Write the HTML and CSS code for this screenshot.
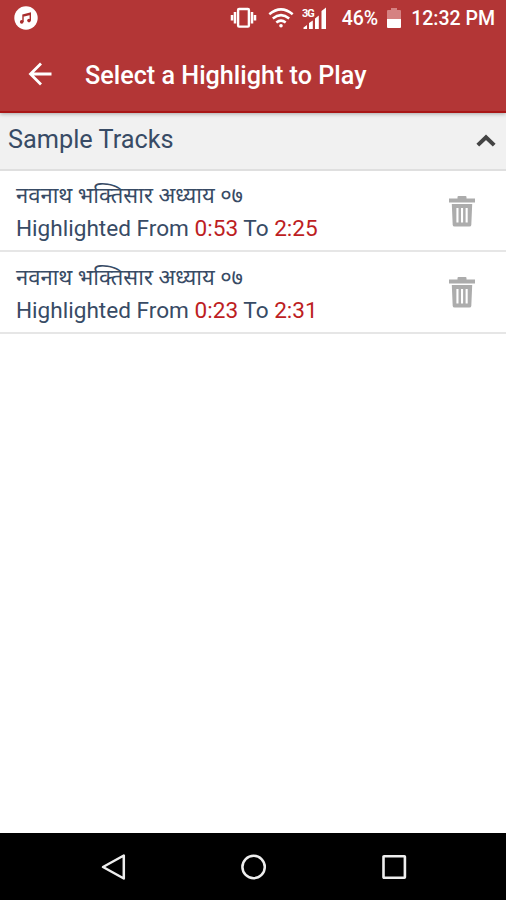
FILE: index.html
```html
<!DOCTYPE html>
<html lang="en">
<head>
    <meta charset="UTF-8">
    <meta name="viewport" content="width=device-width, initial-scale=1.0">
    <title>Select a Highlight to Play</title>
    <link rel="stylesheet" href="styles.css">
</head>
<body>
    <header class="app-header">
        <div class="status-bar">
            <svg class="music-icon" width="24" height="24" viewBox="0 0 24 24">
                <circle cx="12" cy="12" r="11.7" fill="#fff"/>
                <path d="M9 16V9l7.3-1.8v7.3M9 10l7.3-1.8" fill="none" stroke="#a92c2c" stroke-width="1.4"/>
                <circle cx="7.7" cy="15.9" r="1.8" fill="#a92c2c"/>
                <circle cx="15" cy="14.6" r="1.8" fill="#a92c2c"/>
            </svg>
            <svg class="vibrate-icon" width="28" height="22" viewBox="0 0 28 22">
                <rect x="8.1" y="2" width="10.8" height="17.6" rx="1" fill="none" stroke="#fff" stroke-width="2.4"/>
                <path d="M5 5v11.500M2 8v5.500M22 5v11.500M25 8v5.500" stroke="#fff" stroke-width="2.500"/>
            </svg>
            <svg class="wifi-icon" width="26" height="22" viewBox="0 0 26 22">
                <path d="M1.3 7.2Q13-2.5 24.7 7.2M4.8 11.5Q13 4.8 21.2 11.5M8.3 15.4Q13 11.8 17.7 15.4" fill="none" stroke="#fff" stroke-width="2.5"/>
                <circle cx="13" cy="18.8" r="1.8" fill="#fff"/>
            </svg>
            <svg class="signal-icon" width="26" height="24" viewBox="0 0 26 24">
                <text class="network" x="0" y="11">3G</text>
                <path d="M1.500 23v-1.500l3.500-2.500v4zM7 23v-6l3.800-2.500V23zM13 23V12.500l3.800-3V23zM19.500 23V5l4.500-3.500V23z" fill="#fff"/>
            </svg>
            <span class="battery-level">46%</span>
            <svg class="battery-icon" width="14" height="21" viewBox="0 0 14 21">
                <path d="M0 11V3q0-1 1-1h3V0h6v2h3q1 0 1 1v8z" fill="#d58282"/>
                <path d="M0 11h14v8q0 1-1 1H1q-1 0-1-1z" fill="#fff"/>
            </svg>
            <span class="clock">12:32 PM</span>
        </div>
        <div class="toolbar">
            <svg class="back-icon" width="24" height="24" viewBox="0 0 24 24">
                <path d="M23.500 12H2.500M13 1.500L2.500 12 13 22.500" fill="none" stroke="#fff" stroke-width="2.800"/>
            </svg>
            <h1>Select a Highlight to Play</h1>
        </div>
    </header>

    <main>
        <div class="group-header">
            <h2>Sample Tracks</h2>
            <svg class="chevron" width="20" height="13" viewBox="0 0 20 13">
                <path d="M1.8 11.1L10 3.2l8.2 7.9" fill="none" stroke="#444" stroke-width="4"/>
            </svg>
        </div>
        <ul class="track-list">
            <li class="track">
                <div class="track-info">
                    <p class="track-name" lang="mr">नवनाथ भक्तिसार अध्याय ०७</p>
                    <p class="track-range">Highlighted From <span class="time">0:53</span> To <span class="time">2:25</span></p>
                </div>
                <svg class="trash" width="26" height="31" viewBox="0 0 26 31">
                    <path d="M0 2.6h8.5V1q0-1 1-1h7q1 0 1 1v1.6H26v4H0z"/>
                    <path fill-rule="evenodd" d="M2.8 8h20.4l-.9 21q-.1 1.500-2 1.500H5.700q-1.900 0-2-1.500zM7.400 12v14.500h2.100V12zM12 12v14.500h2.100V12zM16.600 12v14.500h2.100V12z"/>
                </svg>
            </li>
            <li class="track">
                <div class="track-info">
                    <p class="track-name" lang="mr">नवनाथ भक्तिसार अध्याय ०७</p>
                    <p class="track-range">Highlighted From <span class="time">0:23</span> To <span class="time">2:31</span></p>
                </div>
                <svg class="trash" width="26" height="31" viewBox="0 0 26 31">
                    <path d="M0 2.6h8.5V1q0-1 1-1h7q1 0 1 1v1.6H26v4H0z"/>
                    <path fill-rule="evenodd" d="M2.8 8h20.4l-.9 21q-.1 1.500-2 1.500H5.700q-1.900 0-2-1.500zM7.400 12v14.500h2.100V12zM12 12v14.500h2.100V12zM16.600 12v14.500h2.100V12z"/>
                </svg>
            </li>
        </ul>
    </main>

    <nav class="nav-bar">
        <svg width="26" height="28" viewBox="0 0 26 28">
            <path d="M22.800 2.500v23L2 14z" fill="none" stroke="#eee" stroke-width="2.500" stroke-linejoin="round"/>
        </svg>
        <svg width="26" height="28" viewBox="0 0 26 28">
            <circle cx="12.600" cy="14" r="11.200" fill="none" stroke="#eee" stroke-width="2.500"/>
        </svg>
        <svg width="26" height="28" viewBox="0 0 26 28">
            <rect x="2.500" y="3.300" width="21.400" height="21.400" rx="0.500" fill="none" stroke="#eee" stroke-width="2.600"/>
        </svg>
    </nav>
</body>
</html>
```

FILE: styles.css
```css
* {
    box-sizing: border-box;
}
body {
    display: flex;
    flex-direction: column;
    height: 100vh;
    margin: 0;
    background: #fff;
    color: #384b65;
    font-family: Roboto, "Noto Sans", sans-serif;
}
h1, h2, p, ul {
    margin: 0;
    padding: 0;
    font-weight: 400;
}
svg {
    display: block;
    flex-shrink: 0;
}
.app-header {
    position: relative;
    height: 113px;
    background: #b33636;
    border-bottom: 2px solid #a91717;
    box-shadow: 0 1px 4px rgba(0,0,0,0.3);
    color: #fff;
}
.status-bar {
    display: flex;
    align-items: center;
    height: 36px;
    padding: 0 11px 0 14px;
    font-size: 19.5px;
    font-weight: 500;
}
.vibrate-icon {
    margin-left: auto;
}
.wifi-icon {
    margin-left: 10px;
}
.signal-icon {
    margin-left: 8px;
}
.network {
    fill: #fff;
    font-size: 11px;
    font-weight: 700;
    letter-spacing: -1px;
}
.battery-level {
    margin-left: 14px;
}
.battery-icon {
    margin-left: 9px;
}
.clock {
    margin-left: 10px;
}
.toolbar {
    display: flex;
    align-items: center;
    height: 75px;
    padding-left: 28px;
}
.toolbar h1 {
    margin-left: 33px;
    padding-top: 3px;
    font-size: 25.2px;
    font-weight: 500;
    white-space: nowrap;
}
main {
    flex: 1;
}
.group-header {
    display: flex;
    align-items: center;
    justify-content: space-between;
    height: 58px;
    padding: 0 10px 1px 8px;
    background: #f1f1f1;
    border-bottom: 2px solid #dfdfdf;
}
.group-header h2 {
    padding-bottom: 2px;
    font-size: 25.3px;
}
.track-list {
    list-style: none;
}
.track {
    display: flex;
    align-items: center;
    justify-content: space-between;
    height: 82px;
    padding: 1px 31px 0 16px;
    border-bottom: 2px solid #e6e6e6;
}
.track:first-child {
    height: 81px;
}
.track-info {
    padding-top: 5px;
}
.track-name {
    font-size: 22px;
    line-height: 31px;
}
.track-range {
    font-size: 22.6px;
    line-height: 36px;
}
.time {
    color: #bd1e23;
}
.trash {
    fill: #acacac;
}
.nav-bar {
    display: flex;
    align-items: center;
    justify-content: space-between;
    height: 67px;
    padding: 0 99px 0 101px;
    background: #000;
}
```
